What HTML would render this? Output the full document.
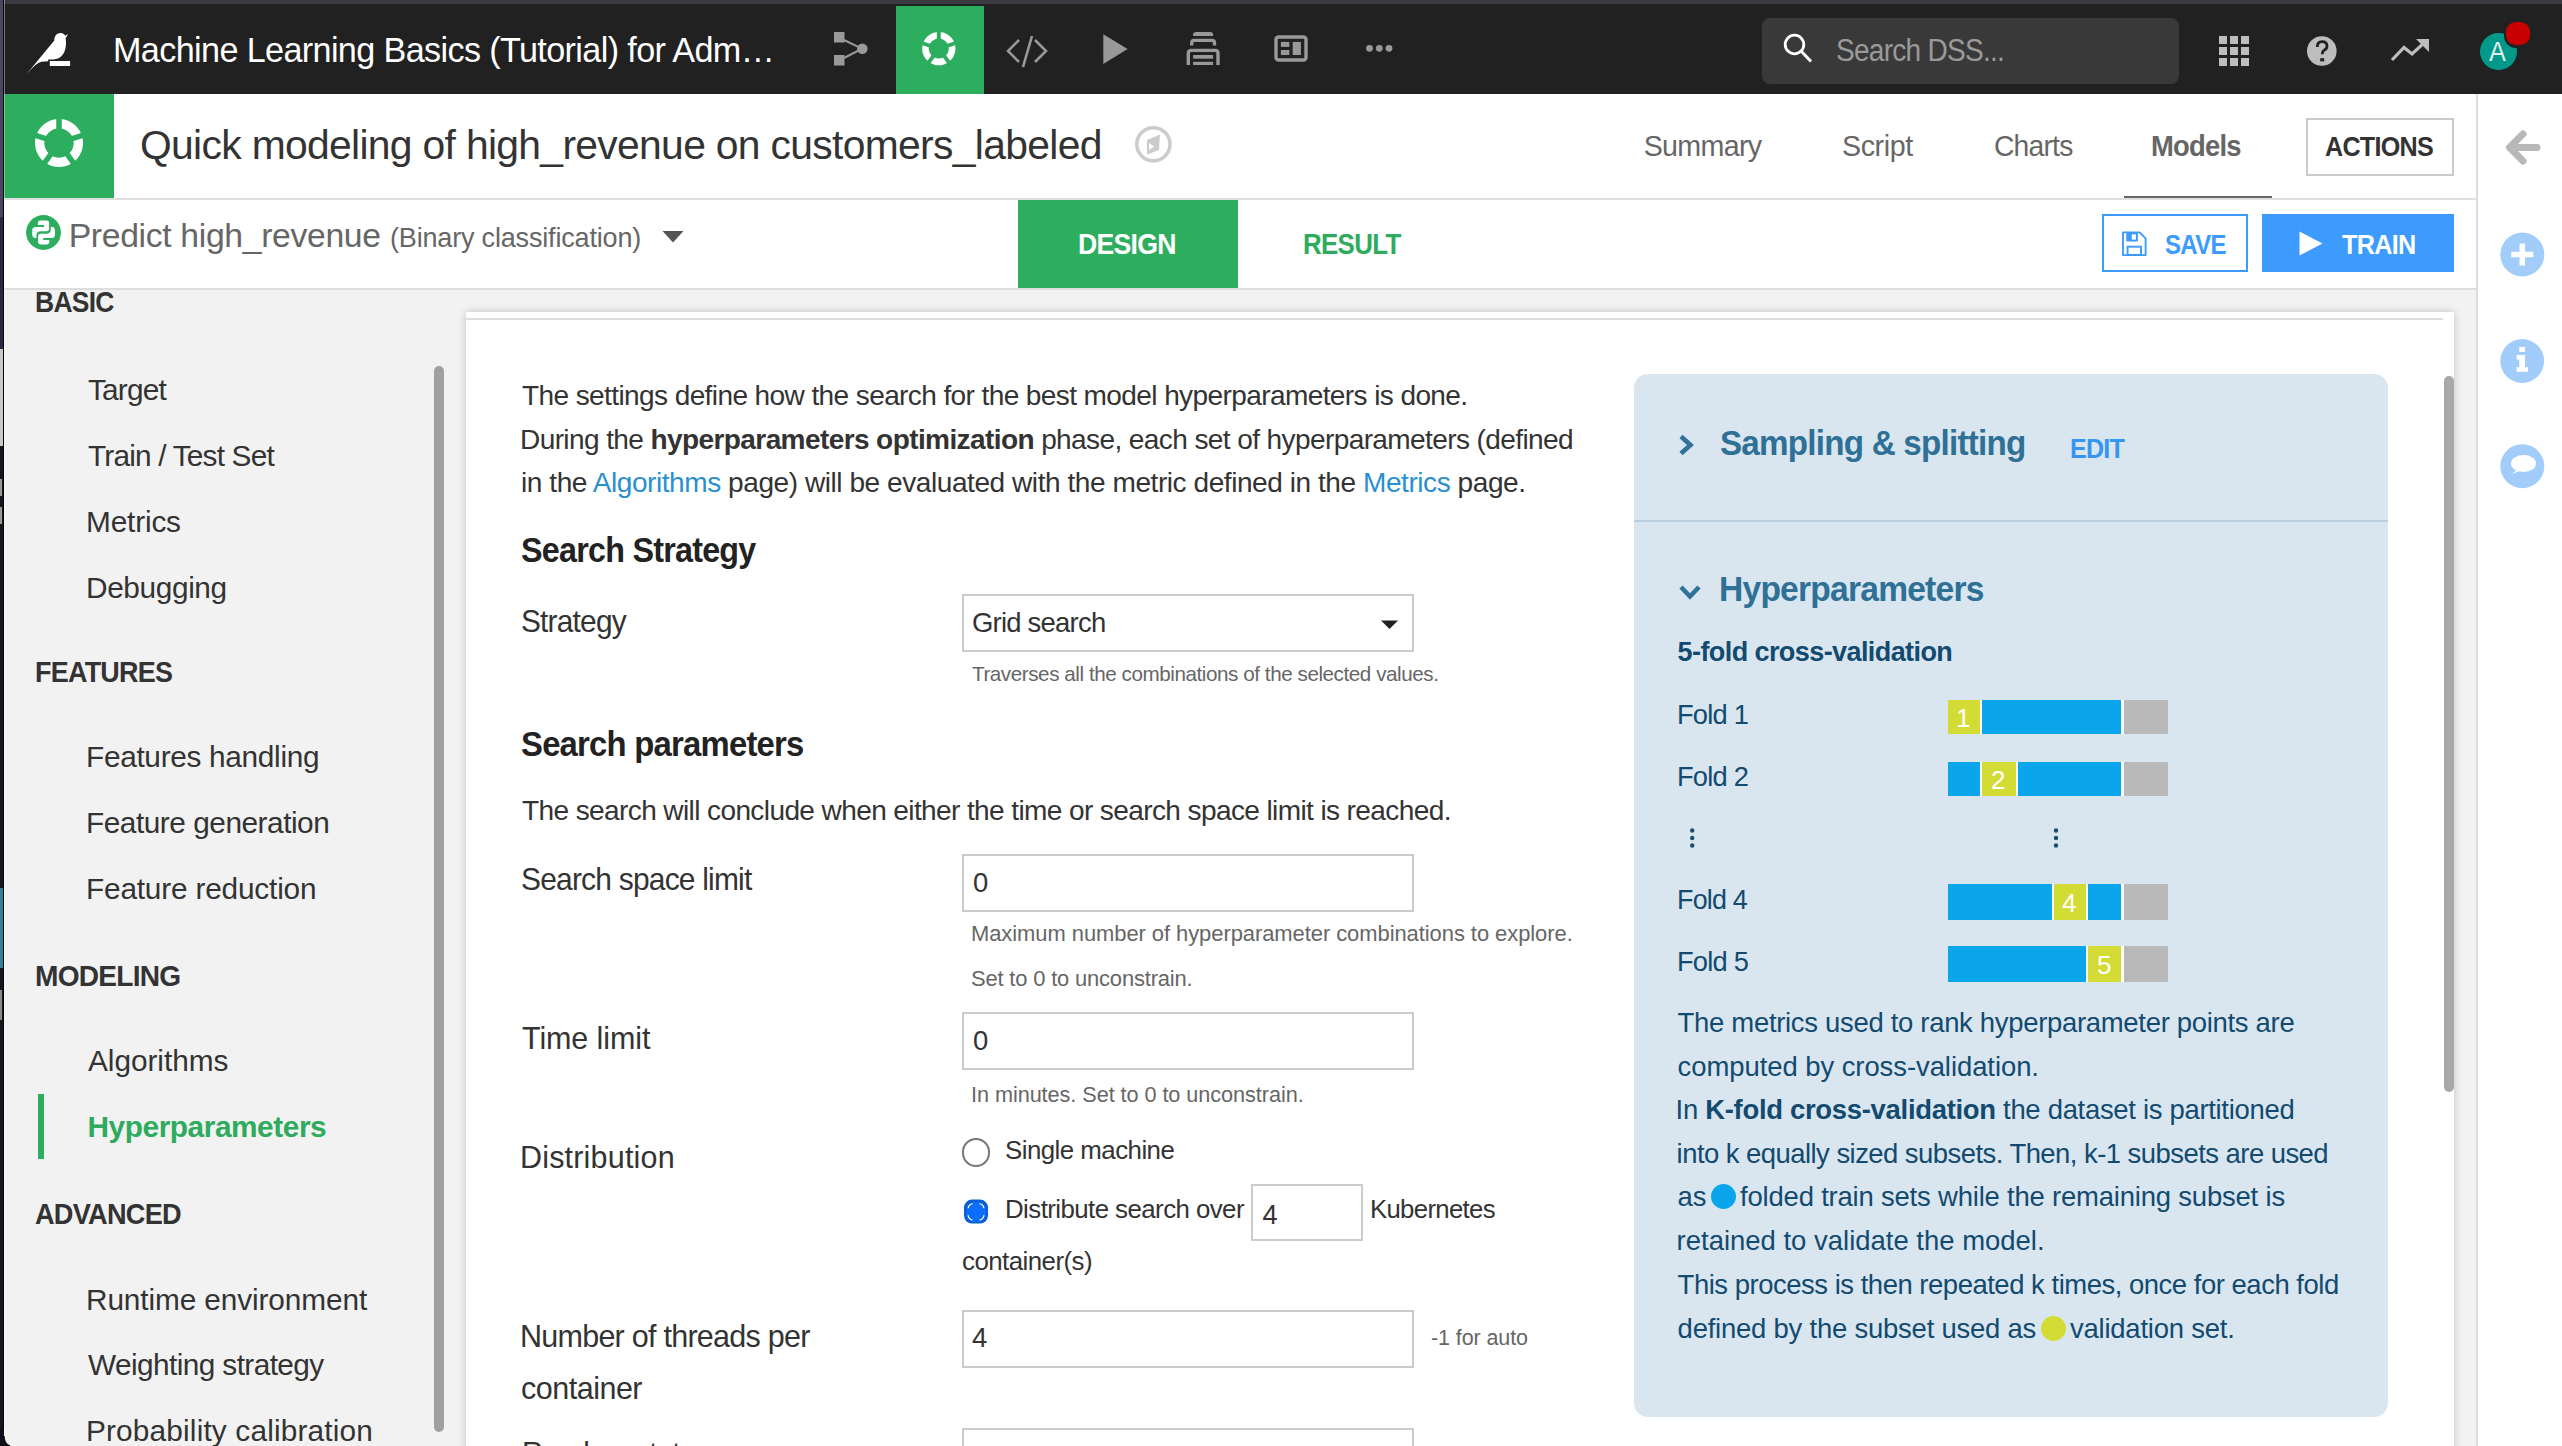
<!DOCTYPE html>
<html><head><meta charset="utf-8"><style>
html,body{margin:0;padding:0;width:2562px;height:1446px;overflow:hidden;background:#fff;font-family:"Liberation Sans",sans-serif;}
.a{position:absolute;}
.t{position:absolute;white-space:nowrap;}
.t b{font-weight:700;}
.dot{display:inline-block;width:25px;height:25px;border-radius:50%;vertical-align:-3px;margin:0 -3px 0 -3px;}
.t{transform-origin:0 0;}

</style></head><body>
<!-- desktop edge -->
<div class="a" style="left:0;top:0;width:4px;height:1446px;background:#16151f"></div>
<div class="a" style="left:0;top:0;width:3px;height:217px;background:#4a4560"></div>
<div class="a" style="left:0;top:217px;width:3px;height:132px;background:#2a2840"></div>
<div class="a" style="left:0;top:349px;width:3px;height:97px;background:#c9c9c9"></div>
<div class="a" style="left:0;top:479px;width:2px;height:17px;background:#9a9a9a"></div>
<div class="a" style="left:0;top:507px;width:2px;height:17px;background:#9a9a9a"></div>
<div class="a" style="left:0;top:888px;width:3px;height:80px;background:#3b7d97"></div>
<div class="a" style="left:0;top:990px;width:2px;height:30px;background:#8a8a8a"></div>
<div class="a" style="left:3px;top:0;width:1px;height:1446px;background:#050505"></div>
<!-- top strip -->
<div class="a" style="left:4px;top:0;width:2558px;height:4px;background:#3a3b40"></div>
<!-- nav bar -->
<div class="a" style="left:4px;top:4px;width:2558px;height:90px;background:#212121"></div>
<!-- bird logo -->
<svg class="a" style="left:20px;top:28px" width="56" height="52" viewBox="20 28 56 52">
 <path fill="#fff" d="M26,74.8 L54.3,40.5 C54.2,36 56.8,33 60.5,33 C63.2,33 64.6,34.5 65.2,35.7 L68.2,34 L65.6,38.2 C66.3,42 66.2,47.5 64.5,51.5 C62.5,56.5 58.5,59.2 53,59.4 L48.2,59.6 L48.2,61.2 L41.5,61.8 C37.5,62.6 34,66 26,74.8 Z"/>
 <rect x="49.8" y="61" width="20.3" height="5" fill="#fff"/>
</svg>
<!-- flow icon -->
<svg class="a" style="left:828px;top:26px" width="44" height="44" viewBox="828 26 44 44">
 <rect x="834" y="32" width="10.5" height="10.5" fill="#999"/>
 <rect x="834" y="55" width="10.5" height="10.5" fill="#999"/>
 <circle cx="862.3" cy="48.7" r="5.3" fill="#999"/>
 <path d="M844,40 L862,48.7 L844,58" stroke="#999" stroke-width="2" fill="none"/>
</svg>
<!-- active green tab -->
<div class="a" style="left:896px;top:6px;width:88px;height:88px;background:#2dae5e"></div>
<svg class="a" style="left:915px;top:25px" width="48" height="48" viewBox="-23.8 -23.6 48 48">
 <path fill="#fff" fill-rule="evenodd" d="M0,-16.6 A16.6,16.6 0 1,1 -0.001,-16.6 Z M0,-10 A10,10 0 1,0 0.001,-10 Z"/>
 <g stroke="#2dae5e" stroke-width="3.9">
  <line x1="0" y1="0" x2="0" y2="-18"/>
  <line x1="0" y1="0" x2="17.1" y2="-5.6"/>
  <line x1="0" y1="0" x2="10.6" y2="14.6"/>
  <line x1="0" y1="0" x2="-10.6" y2="14.6"/>
  <line x1="0" y1="0" x2="-17.1" y2="-5.6"/>
 </g>
</svg>
<!-- code icon -->
<svg class="a" style="left:1000px;top:30px" width="54" height="42" viewBox="1000 30 54 42">
 <path d="M1019,40 L1008,51 L1019,62 M1035,40 L1046,51 L1035,62 M1032,36 L1023,67" stroke="#999" stroke-width="2.6" fill="none"/>
</svg>
<!-- play icon -->
<svg class="a" style="left:1100px;top:30px" width="32" height="38" viewBox="1100 30 32 38">
 <path d="M1103.3,34.3 L1127.6,49 L1103.3,64 Z" fill="#999"/>
</svg>
<!-- stack icon -->
<svg class="a" style="left:1184px;top:29px" width="40" height="40" viewBox="1184 29 40 40">
 <path d="M1193.1,35.9 L1193.1,34.6 Q1193.1,31.9 1196.2,31.9 L1210,31.9 Q1213.1,31.9 1213.1,34.6 L1213.1,35.9 Z" fill="#999"/>
 <path d="M1191.7,45.6 L1191.7,42.8 Q1191.7,40.4 1194.2,40.4 L1212,40.4 Q1214.5,40.4 1214.5,42.8 L1214.5,45.6" stroke="#999" stroke-width="3.3" fill="none"/>
 <path d="M1188.3,65 L1188.3,53.2 Q1188.3,50.4 1191.2,50.4 L1215.1,50.4 Q1218,50.4 1218,53.2 L1218,65" stroke="#999" stroke-width="3.4" fill="none"/>
 <rect x="1193.1" y="55" width="20" height="3.7" fill="#999"/>
 <rect x="1193.1" y="61.8" width="20" height="3.2" fill="#999"/>
</svg>
<!-- dashboard icon -->
<svg class="a" style="left:1272px;top:32px" width="40" height="34" viewBox="1272 32 40 34">
 <rect x="1276" y="37" width="30" height="23" rx="2.5" stroke="#999" stroke-width="3.4" fill="none"/>
 <rect x="1280.9" y="41.9" width="8.4" height="5" fill="#999"/>
 <rect x="1280.9" y="50" width="8.4" height="5" fill="#999"/>
 <rect x="1292.7" y="41.9" width="8.2" height="13.1" fill="#999"/>
</svg>
<!-- dots -->
<svg class="a" style="left:1362px;top:42px" width="34" height="14" viewBox="1362 42 34 14">
 <circle cx="1369.5" cy="48.3" r="3.4" fill="#999"/><circle cx="1379.3" cy="48.3" r="3.4" fill="#999"/><circle cx="1389" cy="48.3" r="3.4" fill="#999"/>
</svg>
<!-- search box -->
<div class="a" style="left:1762px;top:18px;width:417px;height:66px;background:#393939;border-radius:8px"></div>
<svg class="a" style="left:1780px;top:30px" width="40" height="40" viewBox="1780 30 40 40">
 <circle cx="1794.5" cy="44.5" r="9.3" stroke="#fff" stroke-width="2.8" fill="none"/>
 <line x1="1801" y1="51" x2="1811" y2="61.5" stroke="#fff" stroke-width="3"/>
</svg>
<!-- grid icon -->
<svg class="a" style="left:2216px;top:33px" width="36" height="36" viewBox="2216 33 36 36">
 <g fill="#bdbdbd">
 <rect x="2219" y="36" width="8" height="8"/><rect x="2230" y="36" width="8" height="8"/><rect x="2241" y="36" width="8" height="8"/>
 <rect x="2219" y="47" width="8" height="8"/><rect x="2230" y="47" width="8" height="8"/><rect x="2241" y="47" width="8" height="8"/>
 <rect x="2219" y="58" width="8" height="8"/><rect x="2230" y="58" width="8" height="8"/><rect x="2241" y="58" width="8" height="8"/>
 </g>
</svg>
<!-- help -->
<svg class="a" style="left:2304px;top:33px" width="36" height="36" viewBox="2304 33 36 36">
 <circle cx="2321.8" cy="51" r="14.8" fill="#bdbdbd"/>
 <path d="M2317.3,47 Q2317.3,41.6 2322,41.6 Q2327,41.6 2327,46 Q2327,48.8 2324.2,50.3 Q2322.2,51.5 2322.2,54.3" stroke="#212121" stroke-width="2.8" fill="none"/>
 <rect x="2320.2" y="58.2" width="4" height="3.2" fill="#212121"/>
</svg>
<!-- trend -->
<svg class="a" style="left:2388px;top:36px" width="44" height="28" viewBox="2388 36 44 28">
 <path d="M2392,60 L2404,47.5 L2412,54 L2425,42" stroke="#bdbdbd" stroke-width="3.2" fill="none"/>
 <path d="M2416,39 L2429,39 L2429,52 Z" fill="#bdbdbd"/>
</svg>
<!-- avatar -->
<div class="a" style="left:2480px;top:32.6px;width:36.5px;height:37.2px;border-radius:50%;background:#03998a"></div>
<div class="t" style="left:2488.6px;top:36.5px;font-size:27.5px;line-height:30px;color:#dff1ee;transform:scaleX(0.92)">A</div>
<div class="a" style="left:2503.5px;top:19.5px;width:29px;height:28.5px;border-radius:42%;background:#202222"></div>
<div class="a" style="left:2506px;top:22px;width:24px;height:23px;border-radius:42%;background:#c80000"></div>

<!-- header -->
<div class="a" style="left:4px;top:94px;width:110px;height:104px;background:#2dae5e"></div>
<svg class="a" style="left:31px;top:115px" width="56" height="56" viewBox="-28 -28 56 56">
 <path fill="#fff" fill-rule="evenodd" d="M0,-24 A24,24 0 1,1 -0.001,-24 Z M0,-14.5 A14.5,14.5 0 1,0 0.001,-14.5 Z"/>
 <g stroke="#2dae5e" stroke-width="5.5">
  <line x1="0" y1="0" x2="0" y2="-27"/>
  <line x1="0" y1="0" x2="25.7" y2="-8.3"/>
  <line x1="0" y1="0" x2="15.9" y2="21.8"/>
  <line x1="0" y1="0" x2="-15.9" y2="21.8"/>
  <line x1="0" y1="0" x2="-25.7" y2="-8.3"/>
 </g>
 <circle r="14.5" fill="#2dae5e"/>
</svg>
<!-- compass icon -->
<svg class="a" style="left:1130px;top:121px" width="46" height="46" viewBox="1130 121 46 46">
 <circle cx="1153.4" cy="144.3" r="16.6" stroke="#cccccc" stroke-width="3.6" fill="none"/>
 <path d="M1147,140 L1160,134.5 L1159,150 L1147,154.5 Z" fill="#cccccc"/>
 <path d="M1149,143 L1154,146.5 L1149,150 Z" fill="#fff"/>
</svg>
<!-- Models underline -->
<div class="a" style="left:2124px;top:195.5px;width:148px;height:3px;background:#666"></div>
<!-- actions box -->
<div class="a" style="left:2306px;top:118px;width:144px;height:54px;border:2px solid #cccccc"></div>
<!-- header bottom line -->
<div class="a" style="left:4px;top:198px;width:2473px;height:2px;background:#e0e0e0"></div>
<!-- right border vertical -->
<div class="a" style="left:2476px;top:94px;width:2px;height:1352px;background:#dedede"></div>

<!-- subheader -->
<svg class="a" style="left:24px;top:213px" width="40" height="40" viewBox="24 213 40 40">
 <circle cx="43.5" cy="232.5" r="17.4" fill="#2dae5e"/>
 <g id="snk"><path fill="#fff" d="M40.2,220.6 L46.8,220.6 Q49.1,220.6 49.1,222.9 L49.1,228.6 Q49.1,231.3 46.4,231.3 L40.8,231.3 Q36.4,231.3 36.4,235.7 L36.4,237.9 L34.8,237.9 Q32.2,237.9 32.2,233.5 L32.2,230.5 Q32.2,226.9 35.6,226.9 L44,226.9 L44,225 L37.9,225 L37.9,222.9 Q37.9,220.6 40.2,220.6 Z"/></g>
 <use href="#snk" transform="rotate(180 43.6 232.5)"/>
</svg>
<svg class="a" style="left:660px;top:228px" width="26" height="18" viewBox="660 228 26 18">
 <path d="M662.5,231 L683.5,231 L673,242.5 Z" fill="#555"/>
</svg>
<div class="a" style="left:1018px;top:200px;width:220px;height:88px;background:#2dae5e"></div>
<!-- save button -->
<div class="a" style="left:2102px;top:214px;width:142px;height:53.5px;border:2px solid #3c9bfd"></div>
<svg class="a" style="left:2118px;top:227px" width="34" height="34" viewBox="2118 227 34 34">
 <path d="M2123,232.4 L2139.6,232.4 L2145.6,238.4 L2145.6,255.1 L2123,255.1 Z" stroke="#3c9bfd" stroke-width="1.9" fill="none" stroke-linejoin="round"/>
 <rect x="2126.2" y="233" width="11.7" height="8.4" rx="1" fill="#3c9bfd"/>
 <rect x="2131.8" y="234.3" width="4.2" height="5.3" fill="#fff"/>
 <rect x="2127.6" y="246.7" width="13.4" height="8.2" stroke="#3c9bfd" stroke-width="1.9" fill="none"/>
</svg>
<!-- train button -->
<div class="a" style="left:2262px;top:214px;width:192px;height:57.5px;background:#3c9bfd"></div>
<svg class="a" style="left:2295px;top:228px" width="32" height="32" viewBox="2295 228 32 32">
 <path d="M2299.5,231.5 L2322.5,243.5 L2299.5,255.5 Z" fill="#fff"/>
</svg>
<!-- subheader bottom line -->
<div class="a" style="left:4px;top:288px;width:2473px;height:2px;background:#dddddd"></div>

<!-- body -->
<div class="a" style="left:4px;top:290px;width:2472px;height:1156px;background:#f2f2f2"></div>
<!-- left nav active bar -->
<div class="a" style="left:38px;top:1094px;width:6px;height:65px;background:#2dae5e"></div>
<!-- left nav scrollbar -->
<div class="a" style="left:433.5px;top:366px;width:10.5px;height:1066px;background:#a0a0a0;border-radius:5px"></div>
<!-- main card -->
<div class="a" style="left:466px;top:311.5px;width:1988px;height:1200px;background:#fff;box-shadow:0 0 8px rgba(0,0,0,0.2)"></div>
<div class="a" style="left:466px;top:318px;width:1977px;height:2px;background:#dddddd"></div>
<!-- main scrollbar -->
<div class="a" style="left:2443.5px;top:376px;width:10.5px;height:716px;background:#a8a8a8;border-radius:5px"></div>

<!-- select -->
<div class="a" style="left:962px;top:594px;width:448px;height:53.6px;border:2px solid #cccccc;background:#fff"></div>
<svg class="a" style="left:1378px;top:615px" width="24" height="18" viewBox="1378 615 24 18">
 <path d="M1381,620.5 L1398,620.5 L1389.5,629 Z" fill="#222"/>
</svg>
<!-- inputs -->
<div class="a" style="left:962px;top:854.3px;width:448px;height:53.6px;border:2px solid #cccccc;background:#fff"></div>
<div class="a" style="left:962px;top:1012.3px;width:448px;height:53.6px;border:2px solid #cccccc;background:#fff"></div>
<div class="a" style="left:1250.7px;top:1183.7px;width:108.8px;height:53.6px;border:2px solid #cccccc;background:#fff"></div>
<div class="a" style="left:962px;top:1310.4px;width:448px;height:53.6px;border:2px solid #cccccc;background:#fff"></div>
<div class="a" style="left:962px;top:1427.8px;width:448px;height:53.6px;border:2px solid #cccccc;background:#fff"></div>
<!-- radios -->
<div class="a" style="left:961.5px;top:1138.2px;width:24.5px;height:24.5px;border:2px solid #777;border-radius:50%;background:#fff"></div>
<svg class="a" style="left:960px;top:1196px" width="32" height="32" viewBox="960 1196 32 32">
 <rect x="964" y="1199.6" width="24" height="24" rx="8" fill="#0b60d8"/>
 <rect x="968.1" y="1203.7" width="15.9" height="16.4" rx="5" fill="#0a6efe" stroke="#fff" stroke-width="1.3"/>
 <rect x="972.5" y="1202" width="7" height="4" fill="#0a6efe"/>
 <rect x="972.5" y="1218" width="7" height="4" fill="#0a6efe"/>
 <rect x="966.5" y="1208.2" width="4" height="7" fill="#0a6efe"/>
 <rect x="982" y="1208.2" width="4" height="7" fill="#0a6efe"/>
</svg>

<!-- right panel -->
<div class="a" style="left:1634px;top:374.2px;width:753.7px;height:1043px;background:#d9e6ef;border-radius:14px"></div>
<div class="a" style="left:1634px;top:519.5px;width:753.7px;height:2px;background:#b9cfdf"></div>
<svg class="a" style="left:1672px;top:428px" width="30" height="32" viewBox="1672 428 30 32">
 <path d="M1681,436.5 L1690.5,445 L1681,453.5" stroke="#31729b" stroke-width="4.6" fill="none"/>
</svg>
<svg class="a" style="left:1672px;top:578px" width="46" height="30" viewBox="1672 578 46 30">
 <path d="M1681,587 L1690,596.5 L1699,587" stroke="#31729b" stroke-width="4.6" fill="none"/>
</svg>
<!-- fold bars -->
<div class="a" style="left:1948px;top:700px;width:220px;height:33.5px;background:#b9b9b9"></div>
<div class="a" style="left:1948px;top:700px;width:173.4px;height:33.5px;background:#0ba5ec"></div>
<div class="a" style="left:1948px;top:700px;width:32px;height:33.5px;background:#d3dc34"></div>
<div class="a" style="left:1980px;top:700px;width:2px;height:33.5px;background:#fff"></div>
<div class="a" style="left:2121.4px;top:700px;width:2.2px;height:33.5px;background:#fff"></div>

<div class="a" style="left:1948px;top:762px;width:220px;height:33.5px;background:#b9b9b9"></div>
<div class="a" style="left:1948px;top:762px;width:173.4px;height:33.5px;background:#0ba5ec"></div>
<div class="a" style="left:1982px;top:762px;width:34px;height:33.5px;background:#d3dc34"></div>
<div class="a" style="left:1980px;top:762px;width:2px;height:33.5px;background:#fff"></div>
<div class="a" style="left:2016px;top:762px;width:2px;height:33.5px;background:#fff"></div>
<div class="a" style="left:2121.4px;top:762px;width:2.2px;height:33.5px;background:#fff"></div>

<div class="a" style="left:1948px;top:884px;width:220px;height:35.5px;background:#b9b9b9"></div>
<div class="a" style="left:1948px;top:884px;width:173.4px;height:35.5px;background:#0ba5ec"></div>
<div class="a" style="left:2053.5px;top:884px;width:32.5px;height:35.5px;background:#d3dc34"></div>
<div class="a" style="left:2051.5px;top:884px;width:2px;height:35.5px;background:#fff"></div>
<div class="a" style="left:2086px;top:884px;width:2px;height:35.5px;background:#fff"></div>
<div class="a" style="left:2121.4px;top:884px;width:2.2px;height:35.5px;background:#fff"></div>

<div class="a" style="left:1948px;top:946px;width:220px;height:35.5px;background:#b9b9b9"></div>
<div class="a" style="left:1948px;top:946px;width:173.4px;height:35.5px;background:#0ba5ec"></div>
<div class="a" style="left:2088px;top:946px;width:33.4px;height:35.5px;background:#d3dc34"></div>
<div class="a" style="left:2086px;top:946px;width:2px;height:35.5px;background:#fff"></div>
<div class="a" style="left:2121.4px;top:946px;width:2.2px;height:35.5px;background:#fff"></div>
<div class="t" style="left:1956px;top:703px;font-size:26px;line-height:30px;color:#fff">1</div>
<div class="t" style="left:1991px;top:765px;font-size:26px;line-height:30px;color:#fff">2</div>
<div class="t" style="left:2062px;top:888px;font-size:26px;line-height:30px;color:#fff">4</div>
<div class="t" style="left:2097px;top:950px;font-size:26px;line-height:30px;color:#fff">5</div>
<!-- vertical ellipses -->
<svg class="a" style="left:1684px;top:824px" width="16" height="28" viewBox="1684 824 16 28">
 <circle cx="1692.2" cy="830.5" r="2.2" fill="#1b4f72"/><circle cx="1692.2" cy="838" r="2.2" fill="#1b4f72"/><circle cx="1692.2" cy="845.5" r="2.2" fill="#1b4f72"/>
</svg>
<svg class="a" style="left:2048px;top:824px" width="16" height="28" viewBox="2048 824 16 28">
 <circle cx="2056" cy="830.5" r="2.2" fill="#1b4f72"/><circle cx="2056" cy="838" r="2.2" fill="#1b4f72"/><circle cx="2056" cy="845.5" r="2.2" fill="#1b4f72"/>
</svg>

<!-- right sidebar icons -->
<svg class="a" style="left:2500px;top:125px" width="46" height="46" viewBox="2500 125 46 46">
 <path d="M2537,147.5 L2510,147.5 M2523,134 L2509.5,147.5 L2523,161" stroke="#b8b8b8" stroke-width="7" fill="none" stroke-linecap="round" stroke-linejoin="round"/>
</svg>
<svg class="a" style="left:2496px;top:228px" width="52" height="52" viewBox="2496 228 52 52">
 <circle cx="2522.3" cy="254.5" r="22" fill="#a2cdfb"/>
 <path d="M2522.3,243.5 L2522.3,265.5 M2511.3,254.5 L2533.3,254.5" stroke="#fff" stroke-width="5.5"/>
</svg>
<svg class="a" style="left:2496px;top:334px" width="52" height="52" viewBox="2496 334 52 52">
 <circle cx="2522.2" cy="361" r="21.9" fill="#a2cdfb"/>
 <rect x="2519.3" y="347" width="5.7" height="5" fill="#fff"/>
 <rect x="2516.6" y="355" width="8.4" height="4.6" fill="#fff"/>
 <rect x="2519.3" y="355" width="5.7" height="14" fill="#fff"/>
 <rect x="2516.6" y="367.2" width="11.4" height="4.6" fill="#fff"/>
</svg>
<svg class="a" style="left:2496px;top:440px" width="52" height="52" viewBox="2496 440 52 52">
 <circle cx="2522.3" cy="466.2" r="22" fill="#a2cdfb"/>
 <ellipse cx="2523.5" cy="463.5" rx="12.5" ry="8.5" fill="#fff"/>
 <path d="M2512,474 L2519,468 L2522,470 Z" fill="#fff"/>
</svg>

<!-- window edge highlight & corner -->
<div class="a" style="left:4px;top:0;width:1px;height:1446px;background:rgba(255,255,255,0.4)"></div>
<svg class="a" style="left:0;top:1430px" width="20" height="16" viewBox="0 1430 20 16">
 <path d="M0,1430 L4,1430 L4,1436 Q4,1444 10,1446 L0,1446 Z" fill="#0d0f1a"/>
 <path d="M4,1436 Q4,1444 10,1446" stroke="#050505" stroke-width="1.2" fill="none"/>
</svg>

<div id="navtitle" class="t" style="left:113.0px;top:32.69px;font-size:34.16px;line-height:34.16px;color:#fff;font-weight:400;letter-spacing:-0.619px;transform:scaleX(1.0000);">Machine Learning Basics (Tutorial) for Adm…</div>
<div id="search" class="t" style="left:1836.0px;top:36.32px;font-size:30.81px;line-height:30.81px;color:#9a9a9a;font-weight:400;letter-spacing:-0.800px;transform:scaleX(0.9101);">Search DSS...</div>
<div id="title" class="t" style="left:140.0px;top:125.23px;font-size:40.84px;line-height:40.84px;color:#333;font-weight:400;letter-spacing:-0.680px;transform:scaleX(1.0000);">Quick modeling of high_revenue on customers_labeled</div>
<div id="summary" class="t" style="left:1643.7px;top:131.86px;font-size:28.63px;line-height:28.63px;color:#666;font-weight:400;letter-spacing:-0.667px;transform:scaleX(1.0000);">Summary</div>
<div id="script" class="t" style="left:1842.0px;top:131.86px;font-size:28.63px;line-height:28.63px;color:#666;font-weight:400;letter-spacing:-0.400px;transform:scaleX(1.0000);">Script</div>
<div id="charts" class="t" style="left:1994.0px;top:131.86px;font-size:28.63px;line-height:28.63px;color:#666;font-weight:400;letter-spacing:-0.800px;transform:scaleX(0.9873);">Charts</div>
<div id="models" class="t" style="left:2151.0px;top:131.86px;font-size:28.63px;line-height:28.63px;color:#666;font-weight:600;letter-spacing:-0.800px;transform:scaleX(0.9570);">Models</div>
<div id="actions" class="t" style="left:2324.7px;top:132.89px;font-size:27.18px;line-height:27.18px;color:#333;font-weight:600;letter-spacing:-0.800px;transform:scaleX(0.9249);">ACTIONS</div>
<div id="predict" class="t" style="left:68.7px;top:219.16px;font-size:33.72px;line-height:33.72px;color:#666;font-weight:400;letter-spacing:-0.332px;transform:scaleX(1.0000);">Predict high_revenue</div>
<div id="binary" class="t" style="left:390.0px;top:224.91px;font-size:27.03px;line-height:27.03px;color:#666;font-weight:400;letter-spacing:-0.182px;transform:scaleX(1.0000);">(Binary classification)</div>
<div id="design" class="t" style="left:1077.7px;top:228.29px;font-size:30.38px;line-height:30.38px;color:#fff;font-weight:700;letter-spacing:-0.800px;transform:scaleX(0.8755);">DESIGN</div>
<div id="result" class="t" style="left:1303.0px;top:228.29px;font-size:30.38px;line-height:30.38px;color:#2eab5c;font-weight:700;letter-spacing:-0.800px;transform:scaleX(0.8522);">RESULT</div>
<div id="save" class="t" style="left:2165.4px;top:230.50px;font-size:27.76px;line-height:27.76px;color:#3c9bfd;font-weight:700;letter-spacing:-0.800px;transform:scaleX(0.8635);">SAVE</div>
<div id="train" class="t" style="left:2341.7px;top:230.62px;font-size:27.62px;line-height:27.62px;color:#fff;font-weight:700;letter-spacing:-0.800px;transform:scaleX(0.9135);">TRAIN</div>
<div id="basic" class="t" style="left:35.4px;top:286.95px;font-size:29.36px;line-height:29.36px;color:#333;font-weight:700;letter-spacing:-0.800px;transform:scaleX(0.9009);">BASIC</div>
<div id="nav0" class="t" style="left:88.0px;top:374.58px;font-size:29.80px;line-height:29.80px;color:#333;font-weight:400;letter-spacing:-0.800px;transform:scaleX(1.0000);">Target</div>
<div id="nav1" class="t" style="left:88.0px;top:440.58px;font-size:29.80px;line-height:29.80px;color:#333;font-weight:400;letter-spacing:-0.800px;transform:scaleX(1.0000);">Train / Test Set</div>
<div id="nav2" class="t" style="left:86.0px;top:506.58px;font-size:29.80px;line-height:29.80px;color:#333;font-weight:400;letter-spacing:-0.167px;transform:scaleX(1.0000);">Metrics</div>
<div id="nav3" class="t" style="left:86.0px;top:572.58px;font-size:29.80px;line-height:29.80px;color:#333;font-weight:400;letter-spacing:-0.375px;transform:scaleX(1.0000);">Debugging</div>
<div id="nav4" class="t" style="left:86.0px;top:742.18px;font-size:29.80px;line-height:29.80px;color:#333;font-weight:400;letter-spacing:-0.312px;transform:scaleX(1.0000);">Features handling</div>
<div id="nav5" class="t" style="left:86.0px;top:808.18px;font-size:29.80px;line-height:29.80px;color:#333;font-weight:400;letter-spacing:-0.471px;transform:scaleX(1.0000);">Feature generation</div>
<div id="nav6" class="t" style="left:86.0px;top:874.18px;font-size:29.80px;line-height:29.80px;color:#333;font-weight:400;letter-spacing:-0.188px;transform:scaleX(1.0000);">Feature reduction</div>
<div id="nav7" class="t" style="left:88.0px;top:1046.48px;font-size:29.80px;line-height:29.80px;color:#333;font-weight:400;letter-spacing:-0.044px;transform:scaleX(1.0000);">Algorithms</div>
<div id="nav8" class="t" style="left:86.0px;top:1284.78px;font-size:29.80px;line-height:29.80px;color:#333;font-weight:400;letter-spacing:-0.111px;transform:scaleX(1.0000);">Runtime environment</div>
<div id="nav9" class="t" style="left:88.0px;top:1350.28px;font-size:29.80px;line-height:29.80px;color:#333;font-weight:400;letter-spacing:-0.588px;transform:scaleX(1.0000);">Weighting strategy</div>
<div id="nav10" class="t" style="left:86.0px;top:1415.78px;font-size:29.80px;line-height:29.80px;color:#333;font-weight:400;letter-spacing:0.164px;transform:scaleX(1.0000);">Probability calibration</div>
<div id="hyper" class="t" style="left:87.5px;top:1111.78px;font-size:29.80px;line-height:29.80px;color:#2eab5c;font-weight:700;letter-spacing:-0.429px;transform:scaleX(1.0000);">Hyperparameters</div>
<div id="features" class="t" style="left:35.0px;top:657.15px;font-size:29.36px;line-height:29.36px;color:#333;font-weight:700;letter-spacing:-0.800px;transform:scaleX(0.9170);">FEATURES</div>
<div id="modeling" class="t" style="left:35.0px;top:961.15px;font-size:29.36px;line-height:29.36px;color:#333;font-weight:700;letter-spacing:-0.800px;transform:scaleX(0.9574);">MODELING</div>
<div id="advanced" class="t" style="left:34.5px;top:1198.85px;font-size:29.36px;line-height:29.36px;color:#333;font-weight:700;letter-spacing:-0.800px;transform:scaleX(0.9244);">ADVANCED</div>
<div id="p1" class="t" style="left:522.0px;top:381.95px;font-size:28.05px;line-height:28.05px;color:#333;font-weight:400;letter-spacing:-0.610px;transform:scaleX(1.0000);">The settings define how the search for the best model hyperparameters is done.</div>
<div id="p2" class="t" style="left:520.0px;top:426.05px;font-size:28.05px;line-height:28.05px;color:#333;font-weight:400;letter-spacing:-0.610px;transform:scaleX(1.0000);">During the <b>hyperparameters optimization</b> phase, each set of hyperparameters (defined</div>
<div id="p3" class="t" style="left:521.0px;top:468.95px;font-size:28.05px;line-height:28.05px;color:#333;font-weight:400;letter-spacing:-0.447px;transform:scaleX(1.0000);">in the <span style="color:#2a8fd0">Algorithms</span> page) will be evaluated with the metric defined in the <span style="color:#2a8fd0">Metrics</span> page.</div>
<div id="h1" class="t" style="left:521.0px;top:532.72px;font-size:34.59px;line-height:34.59px;color:#222;font-weight:700;letter-spacing:-0.800px;transform:scaleX(0.9333);">Search Strategy</div>
<div id="lstrat" class="t" style="left:521.0px;top:606.36px;font-size:30.52px;line-height:30.52px;color:#333;font-weight:400;letter-spacing:-0.800px;transform:scaleX(0.9777);">Strategy</div>
<div id="gridsearch" class="t" style="left:972.0px;top:607.88px;font-size:28.49px;line-height:28.49px;color:#333;font-weight:400;letter-spacing:-0.800px;transform:scaleX(0.9635);">Grid search</div>
<div id="trav" class="t" style="left:972.0px;top:664.43px;font-size:20.64px;line-height:20.64px;color:#666;font-weight:400;letter-spacing:-0.434px;transform:scaleX(1.0000);">Traverses all the combinations of the selected values.</div>
<div id="h2" class="t" style="left:521.0px;top:726.52px;font-size:34.59px;line-height:34.59px;color:#222;font-weight:700;letter-spacing:-0.800px;transform:scaleX(0.9489);">Search parameters</div>
<div id="p4" class="t" style="left:522.0px;top:796.95px;font-size:28.05px;line-height:28.05px;color:#333;font-weight:400;letter-spacing:-0.615px;transform:scaleX(1.0000);">The search will conclude when either the time or search space limit is reached.</div>
<div id="lssl" class="t" style="left:521.0px;top:864.36px;font-size:30.52px;line-height:30.52px;color:#333;font-weight:400;letter-spacing:-0.800px;transform:scaleX(0.9813);">Search space limit</div>
<div id="in0a" class="t" style="left:973.0px;top:868.85px;font-size:27.47px;line-height:27.47px;color:#333;font-weight:400;letter-spacing:0.000px;transform:scaleX(1.0000);">0</div>
<div id="max" class="t" style="left:971.0px;top:923.22px;font-size:21.95px;line-height:21.95px;color:#666;font-weight:400;letter-spacing:-0.054px;transform:scaleX(1.0000);">Maximum number of hyperparameter combinations to explore.</div>
<div id="set0" class="t" style="left:971.0px;top:967.62px;font-size:21.95px;line-height:21.95px;color:#666;font-weight:400;letter-spacing:-0.174px;transform:scaleX(1.0000);">Set to 0 to unconstrain.</div>
<div id="ltime" class="t" style="left:522.0px;top:1023.26px;font-size:30.52px;line-height:30.52px;color:#333;font-weight:400;letter-spacing:-0.111px;transform:scaleX(1.0000);">Time limit</div>
<div id="in0b" class="t" style="left:973.0px;top:1027.25px;font-size:27.47px;line-height:27.47px;color:#333;font-weight:400;letter-spacing:0.000px;transform:scaleX(1.0000);">0</div>
<div id="inmin" class="t" style="left:971.0px;top:1083.57px;font-size:21.66px;line-height:21.66px;color:#666;font-weight:400;letter-spacing:-0.057px;transform:scaleX(1.0000);">In minutes. Set to 0 to unconstrain.</div>
<div id="ldist" class="t" style="left:520.0px;top:1141.66px;font-size:30.52px;line-height:30.52px;color:#333;font-weight:400;letter-spacing:0.182px;transform:scaleX(1.0000);">Distribution</div>
<div id="single" class="t" style="left:1005.0px;top:1137.90px;font-size:25.87px;line-height:25.87px;color:#333;font-weight:400;letter-spacing:-0.538px;transform:scaleX(1.0000);">Single machine</div>
<div id="distover" class="t" style="left:1005.0px;top:1197.10px;font-size:25.87px;line-height:25.87px;color:#333;font-weight:400;letter-spacing:-0.571px;transform:scaleX(1.0000);">Distribute search over</div>
<div id="in4a" class="t" style="left:1262.4px;top:1200.79px;font-size:27.18px;line-height:27.18px;color:#333;font-weight:400;letter-spacing:0.000px;transform:scaleX(1.0000);">4</div>
<div id="kube" class="t" style="left:1370.0px;top:1197.12px;font-size:25.73px;line-height:25.73px;color:#333;font-weight:400;letter-spacing:-0.667px;transform:scaleX(1.0000);">Kubernetes</div>
<div id="cont" class="t" style="left:962.0px;top:1249.30px;font-size:25.87px;line-height:25.87px;color:#333;font-weight:400;letter-spacing:-0.545px;transform:scaleX(1.0000);">container(s)</div>
<div id="lthr" class="t" style="left:520.0px;top:1321.26px;font-size:30.52px;line-height:30.52px;color:#333;font-weight:400;letter-spacing:-0.750px;transform:scaleX(1.0000);">Number of threads per</div>
<div id="lcont" class="t" style="left:521.0px;top:1373.36px;font-size:30.52px;line-height:30.52px;color:#333;font-weight:400;letter-spacing:-0.500px;transform:scaleX(1.0000);">container</div>
<div id="in4b" class="t" style="left:972.0px;top:1324.25px;font-size:27.47px;line-height:27.47px;color:#333;font-weight:400;letter-spacing:0.000px;transform:scaleX(1.0000);">4</div>
<div id="auto" class="t" style="left:1431.0px;top:1327.59px;font-size:21.51px;line-height:21.51px;color:#666;font-weight:400;letter-spacing:-0.100px;transform:scaleX(1.0000);">-1 for auto</div>
<div id="lrand" class="t" style="left:521.8px;top:1438.16px;font-size:30.52px;line-height:30.52px;color:#333;font-weight:400;letter-spacing:2.364px;transform:scaleX(1.0000);letter-spacing:-0.8px;transform:scaleX(0.96);">Random state</div>
<div id="samp" class="t" style="left:1720.0px;top:425.72px;font-size:34.59px;line-height:34.59px;color:#2f7096;font-weight:600;letter-spacing:-0.800px;transform:scaleX(0.9596);">Sampling &amp; splitting</div>
<div id="edit" class="t" style="left:2070.4px;top:434.79px;font-size:27.18px;line-height:27.18px;color:#3595f0;font-weight:700;letter-spacing:-0.800px;transform:scaleX(0.9215);">EDIT</div>
<div id="hyp2" class="t" style="left:1719.0px;top:571.72px;font-size:34.59px;line-height:34.59px;color:#2f7096;font-weight:600;letter-spacing:-0.800px;transform:scaleX(0.9712);">Hyperparameters</div>
<div id="fivefold" class="t" style="left:1677.6px;top:638.91px;font-size:27.03px;line-height:27.03px;color:#134a70;font-weight:700;letter-spacing:-0.591px;transform:scaleX(1.0000);">5-fold cross-validation</div>
<div id="fold0" class="t" style="left:1677.4px;top:700.75px;font-size:27.47px;line-height:27.47px;color:#134a70;font-weight:400;letter-spacing:-0.800px;transform:scaleX(0.9929);">Fold 1</div>
<div id="fold1" class="t" style="left:1677.4px;top:762.55px;font-size:27.47px;line-height:27.47px;color:#134a70;font-weight:400;letter-spacing:-0.800px;transform:scaleX(0.9929);">Fold 2</div>
<div id="fold2" class="t" style="left:1677.4px;top:885.75px;font-size:27.47px;line-height:27.47px;color:#134a70;font-weight:400;letter-spacing:-0.800px;transform:scaleX(0.9789);">Fold 4</div>
<div id="fold3" class="t" style="left:1677.4px;top:947.65px;font-size:27.47px;line-height:27.47px;color:#134a70;font-weight:400;letter-spacing:-0.800px;transform:scaleX(0.9929);">Fold 5</div>
<div id="rp0" class="t" style="left:1677.6px;top:1008.55px;font-size:27.47px;line-height:27.47px;color:#134a70;font-weight:400;letter-spacing:-0.306px;transform:scaleX(1.0000);">The metrics used to rank hyperparameter points are</div>
<div id="rp1" class="t" style="left:1677.6px;top:1052.65px;font-size:27.47px;line-height:27.47px;color:#134a70;font-weight:400;letter-spacing:-0.071px;transform:scaleX(1.0000);">computed by cross-validation.</div>
<div id="rp2" class="t" style="left:1675.6px;top:1095.65px;font-size:27.47px;line-height:27.47px;color:#134a70;font-weight:400;letter-spacing:-0.308px;transform:scaleX(1.0000);">In <b>K-fold cross-validation</b> the dataset is partitioned</div>
<div id="rp3" class="t" style="left:1676.6px;top:1139.75px;font-size:27.47px;line-height:27.47px;color:#134a70;font-weight:400;letter-spacing:-0.545px;transform:scaleX(1.0000);">into k equally sized subsets. Then, k-1 subsets are used</div>
<div id="rp4" class="t" style="left:1677.6px;top:1183.15px;font-size:27.47px;line-height:27.47px;color:#134a70;font-weight:400;letter-spacing:-0.200px;transform:scaleX(1.0000);">as <span class="dot" style="background:#0ba5ec"></span> folded train sets while the remaining subset is</div>
<div id="rp5" class="t" style="left:1676.6px;top:1227.25px;font-size:27.47px;line-height:27.47px;color:#134a70;font-weight:400;letter-spacing:0.000px;transform:scaleX(1.0000);">retained to validate the model.</div>
<div id="rp6" class="t" style="left:1677.6px;top:1271.25px;font-size:27.47px;line-height:27.47px;color:#134a70;font-weight:400;letter-spacing:-0.482px;transform:scaleX(1.0000);">This process is then repeated k times, once for each fold</div>
<div id="rp7" class="t" style="left:1677.6px;top:1314.75px;font-size:27.47px;line-height:27.47px;color:#134a70;font-weight:400;letter-spacing:-0.222px;transform:scaleX(1.0000);">defined by the subset used as <span class="dot" style="background:#d3dc34"></span> validation set.</div>
</body></html>
